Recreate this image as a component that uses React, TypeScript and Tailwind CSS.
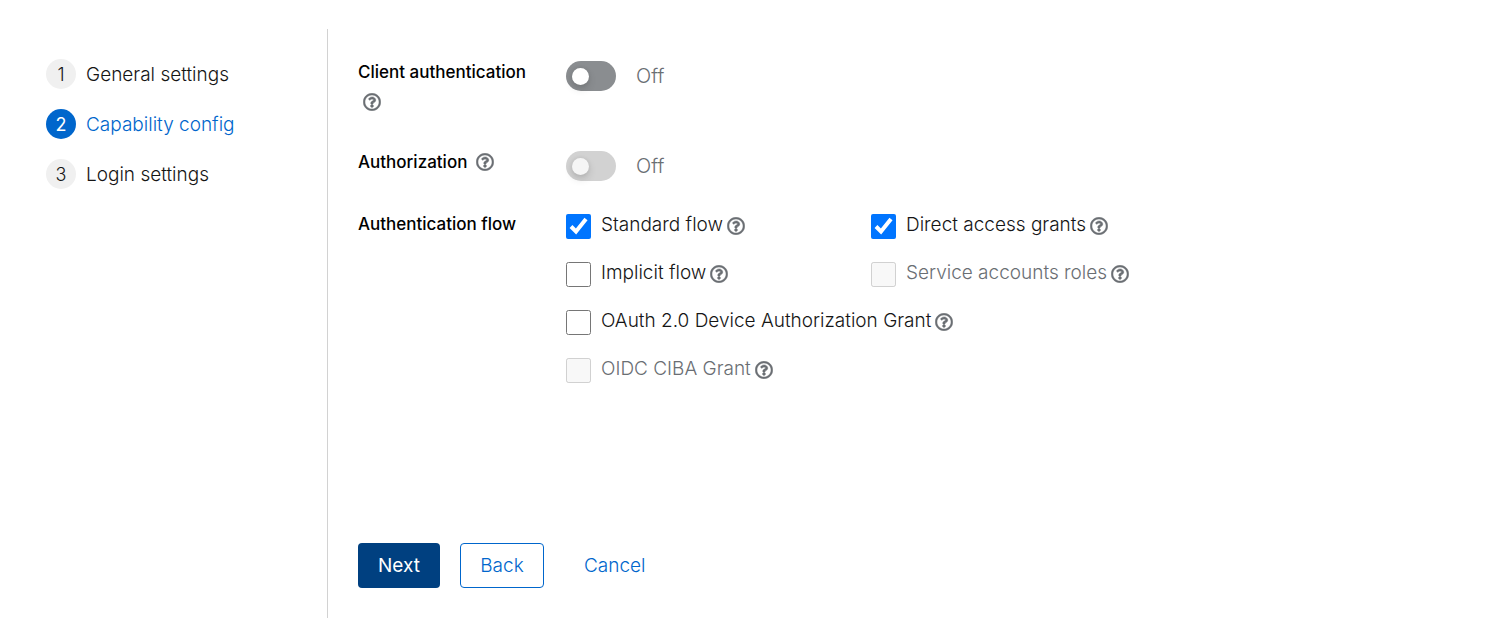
import { useState, type ReactNode } from "react";
import { FaRegQuestionCircle } from "react-icons/fa";

const steps = ["General settings", "Capability config", "Login settings"];

function Help({ topic, className = "" }: { topic: string; className?: string }) {
  return (
    <button
      type="button"
      aria-label={`Help for ${topic}`}
      className={`inline-flex shrink-0 text-[#6a6e73] ${className}`}
    >
      <FaRegQuestionCircle className="size-[18px] stroke-current [stroke-width:14]" />
    </button>
  );
}

function Row({ children, className = "" }: { children: ReactNode; className?: string }) {
  return <div className={`flex items-start gap-5 ${className}`}>{children}</div>;
}

function FieldLabel({ htmlFor, children }: { htmlFor: string; children: string }) {
  return (
    <div className="flex w-[188px] shrink-0 flex-wrap items-center">
      <label htmlFor={htmlFor} className="mr-1 text-[17px] font-medium whitespace-nowrap text-black">
        {children}
      </label>
      <span className="flex h-[30px] items-center px-[5px]">
        <Help topic={children} />
      </span>
    </div>
  );
}

function Toggle({ id, disabled = false }: { id: string; disabled?: boolean }) {
  const [on, setOn] = useState(false);
  return (
    <div className="flex items-center gap-5 pt-1">
      <button
        id={id}
        type="button"
        role="switch"
        aria-checked={on}
        disabled={disabled}
        onClick={() => setOn(!on)}
        className={`flex h-[30px] w-[50px] items-center rounded-full px-[6px] ${
          disabled ? "bg-[#d2d2d2]" : on ? "justify-end bg-[#0066cc]" : "bg-[#8a8d90]"
        }`}
      >
        <span
          className={`size-[17px] rounded-full shadow-[0_4px_8px_rgba(3,3,3,0.14),0_0_4px_rgba(3,3,3,0.08)] ${
            disabled ? "bg-[#f5f5f5]" : "bg-white"
          }`}
        />
      </button>
      <span className="text-xl/[30px] text-[#6a6e73]">{on ? "On" : "Off"}</span>
    </div>
  );
}

function Flow({
  id,
  label,
  checked = false,
  disabled = false,
  wide = false,
}: {
  id: string;
  label: string;
  checked?: boolean;
  disabled?: boolean;
  wide?: boolean;
}) {
  return (
    <div className={`flex h-[30px] items-start whitespace-nowrap ${wide ? "col-span-2" : ""}`}>
      <input
        id={id}
        type="checkbox"
        defaultChecked={checked}
        disabled={disabled}
        className="mt-[5px] mr-[10px] size-[25px] shrink-0"
      />
      <label htmlFor={id} className={`leading-8 ${disabled ? "text-[#6a6e73]" : ""}`}>
        {label}
      </label>
      <Help topic={label} className="mt-2 ml-1" />
    </div>
  );
}

export default function App() {
  return (
    <div className="flex min-h-screen bg-white pt-[29px] pb-[14px] font-['Inter','Liberation_Sans',sans-serif] text-[19px] leading-[30px] font-light text-[#151515]">
      <nav aria-label="Wizard steps" className="w-[327px] shrink-0 pt-[30px] pl-[46px]">
        <ol className="flex flex-col gap-5">
          {steps.map((step, i) => (
            <li key={step}>
              <a
                href={`#step-${i + 1}`}
                aria-current={i === 1 ? "step" : undefined}
                className={`flex h-[30px] items-start gap-[10px] leading-8 ${i === 1 ? "text-[#0066cc]" : ""}`}
              >
                <span
                  className={`size-[30px] rounded-full text-center text-lg/8 ${
                    i === 1 ? "bg-[#0066cc] font-normal text-white" : "bg-[#f0f0f0]"
                  }`}
                >
                  {i + 1}
                </span>
                {step}
              </a>
            </li>
          ))}
        </ol>
      </nav>

      <main className="flex flex-1 flex-col border-l border-[#d2d2d2] px-[30px] pt-7 pb-[30px]">
        <form className="flex flex-1 flex-col" onSubmit={(e) => e.preventDefault()}>
          <div className="flex flex-col gap-7">
            <Row className="min-h-[62px]">
              <FieldLabel htmlFor="client-auth">Client authentication</FieldLabel>
              <Toggle id="client-auth" />
            </Row>
            <Row>
              <FieldLabel htmlFor="authorization">Authorization</FieldLabel>
              <Toggle id="authorization" disabled />
            </Row>
            <Row>
              <span id="flow-label" className="w-[188px] shrink-0 text-[17px] font-medium text-black">
                Authentication flow
              </span>
              <div
                role="group"
                aria-labelledby="flow-label"
                className="grid max-w-[610px] flex-1 grid-cols-2 gap-y-[18px]"
              >
                <Flow id="standard" label="Standard flow" checked />
                <Flow id="direct" label="Direct access grants" checked />
                <Flow id="implicit" label="Implicit flow" />
                <Flow id="service" label="Service accounts roles" disabled />
                <Flow id="device" label="OAuth 2.0 Device Authorization Grant" wide />
                <Flow id="ciba" label="OIDC CIBA Grant" disabled wide />
              </div>
            </Row>
          </div>

          <div className="mt-auto flex gap-5 pt-10">
            <button type="submit" className="h-[45px] w-[82px] rounded-[4px] bg-[#004080] font-normal text-white">
              Next
            </button>
            <button type="button" className="h-[45px] w-[84px] rounded-[4px] border border-[#0066cc] text-[#0066cc]">
              Back
            </button>
            <button type="button" className="h-[45px] px-5 text-[#0066cc]">
              Cancel
            </button>
          </div>
        </form>
      </main>
    </div>
  );
}
